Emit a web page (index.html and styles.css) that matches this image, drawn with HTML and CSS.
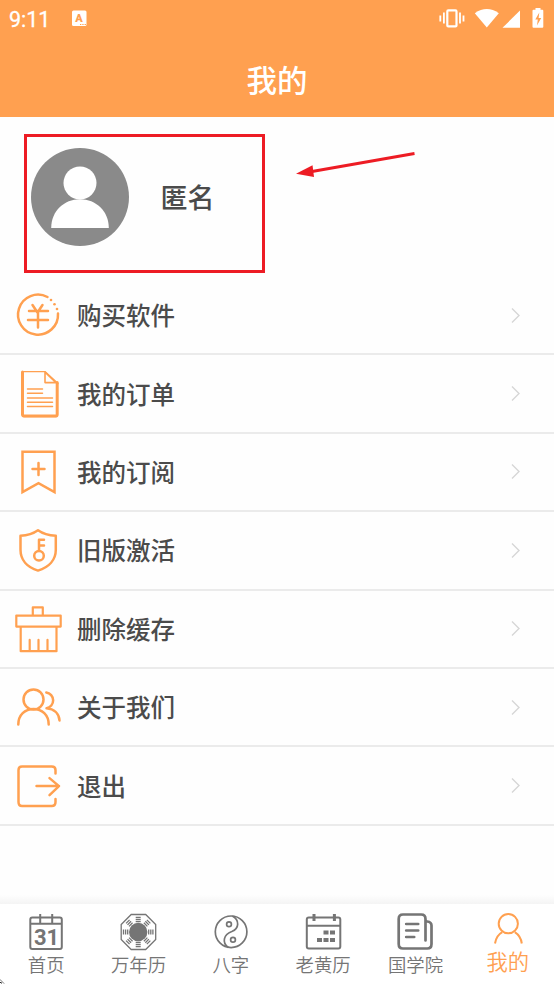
FILE: index.html
```html
<!DOCTYPE html>
<html lang="zh-CN">
<head>
<meta charset="utf-8">
<title>我的</title>
<link rel="stylesheet" href="styles.css">
</head>
<body>
<div class="screen">
  <header class="header">
    <div class="status">
      <span class="clock">9:11</span>
      <svg class="badge" viewBox="72 10 15 16"><rect x="72" y="10.500" width="14.500" height="15.500" rx="1.500" fill="#fff"/><text class="badge-letter" x="79" y="22" text-anchor="middle">A</text><path d="M80 24.500h6" stroke="#ffa050" stroke-width="1.200" stroke-dasharray="1.300 1"/></svg>
      <svg class="signals" viewBox="436 4 112 28" fill="#fff">
        <g fill="none" stroke="#fff" stroke-width="1.800"><rect x="447.300" y="10.400" width="9.200" height="16" rx="1" stroke-width="2.200"/><path d="M443.900 12.500v11M460 12.500v11M440.300 15.500v6M463.500 15.500v6"/></g>
        <path d="M474.800 13.200Q486.800 4.800 498.800 13.200L486.800 27.500Z"/><path d="M520 10.500V27.800H502.500Z"/>
        <path d="M535.500 8h5v1.800h1.800q1 0 1 1v16q0 1-1 1h-8.800q-1 0-1-1v-16q0-1 1-1h2z"/>
        <path d="M539.300 12.500l-4 7h2.500l-.8 6 4.200-7.500h-2.600l.7-5.500z" fill="#ffa050"/>
      </svg>
    </div>
    <h1 class="title">我的</h1>
  </header>

  <section class="profile">
    <svg class="avatar" viewBox="0 0 98 98"><circle cx="49" cy="49" r="49" fill="#8a8a8a"/><circle cx="49" cy="35" r="16.500" fill="#fff"/><path d="M20.200 80C20.200 63 33 51.200 49 51.200S77.800 63 77.800 80Z" fill="#fff"/></svg>
    <span class="name">匿名</span>
    <svg class="annotation" viewBox="0 117 554 160"><rect x="25.500" y="135.500" width="238" height="136" fill="none" stroke="#ed1c24" stroke-width="3"/><path d="M312 171.500L414.500 153.500" stroke="#ed1c24" stroke-width="3"/><path d="M296 173.800L312.500 165.300L314 177Z" fill="#ed1c24"/></svg>
  </section>

  <nav class="menu">
    <a class="row">
      <svg class="icon" viewBox="12 288.500 54 52"><path d="M47.500 296.500A20 20 0 1 0 58 313"/><path d="M32.500 304.500l5 7.500 5-7.500M29 310.500h19M28 319.500h20M38 311v16"/><g class="dots"><circle cx="51" cy="299.500" r="1.300"/><circle cx="54.500" cy="303.800" r="1.300"/><circle cx="57" cy="308.500" r="1.300"/></g></svg>
      <span>购买软件</span><svg class="chevron" viewBox="0 0 10 17"><path d="M1 1.500L8 8.500L1 15.500"/></svg>
    </a>
    <a class="row">
      <svg class="icon" viewBox="12 367.400 54 52"><path stroke-width="1.300" d="M23 371h22l13 12"/><path stroke-width="3" d="M22.500 371.500v42.500q0 1.500 2 1.500h31q1.700 0 1.700-1.500V382"/><path stroke-width="1.300" d="M23 416h34"/><path stroke-width="1.600" d="M45 371.500v10.500h11z"/><path stroke-width="1.500" d="M27.500 388.500h15M27.500 392.700h15M27.500 397.300h25M27.500 401.600h25M27.500 406h25"/></svg>
      <span>我的订单</span><svg class="chevron" viewBox="0 0 10 17"><path d="M1 1.500L8 8.500L1 15.500"/></svg>
    </a>
    <a class="row">
      <svg class="icon" viewBox="12 445.800 54 52"><path stroke-linejoin="miter" d="M22.500 451.500H54.500V492L38.500 483L22.500 492Z"/><path d="M32.500 468.800h12M38.500 462.800v12"/></svg>
      <span>我的订阅</span><svg class="chevron" viewBox="0 0 10 17"><path d="M1 1.500L8 8.500L1 15.500"/></svg>
    </a>
    <a class="row">
      <svg class="icon" viewBox="12 524.200 54 52"><path d="M38 530.500Q31 535.500 20.500 536V550C20.500 560 27 567.500 38 570.800C49 567.500 55.800 560 55.800 550V536Q45 535.500 38 530.500Z"/><circle cx="39" cy="556" r="4.800"/><path d="M39 551V540h5M39 545.700h5"/></svg>
      <span>旧版激活</span><svg class="chevron" viewBox="0 0 10 17"><path d="M1 1.500L8 8.500L1 15.500"/></svg>
    </a>
    <a class="row">
      <svg class="icon" viewBox="12 602.600 54 52"><path stroke-width="2.200" d="M32.800 615v-8h10v8M16.300 615.200H60.700V626.200H16.300ZM20.700 626.500V650.800H56.500V626.500M29.700 639.500v11M38.500 639.500v11M47.500 639.500v11"/></svg>
      <span>删除缓存</span><svg class="chevron" viewBox="0 0 10 17"><path d="M1 1.500L8 8.500L1 15.500"/></svg>
    </a>
    <a class="row">
      <svg class="icon" viewBox="12 681 54 52"><circle cx="33.500" cy="699.500" r="10"/><path d="M18.300 724.500C18.300 715 25 709 33.500 709S48.700 715 48.700 724.500M46.300 692.500A8 8 0 0 1 46.500 708.300C54 709 59 713.500 59.500 720.500"/></svg>
      <span>关于我们</span><svg class="chevron" viewBox="0 0 10 17"><path d="M1 1.500L8 8.500L1 15.500"/></svg>
    </a>
    <a class="row">
      <svg class="icon" viewBox="12 759.400 54 52"><path d="M55.500 773V769.500Q55.500 765.800 51.800 765.800H22Q18.500 765.800 18.500 769.500V801.500Q18.500 805.500 22 805.500H51.800Q55.500 805.500 55.500 801.500V798.500M36.500 785.500H59M49.500 777.500L59 785.500L49.500 794.500"/></svg>
      <span>退出</span><svg class="chevron" viewBox="0 0 10 17"><path d="M1 1.500L8 8.500L1 15.500"/></svg>
    </a>
  </nav>

  <footer class="tabs">
    <a class="tab"><svg viewBox="22 910 48 43"><rect x="30.300" y="917.500" width="31.500" height="31.500" rx="2"/><path d="M30 923.800h32M40.200 914v10M52.200 914v10"/><text class="date" x="46.500" y="944.500" text-anchor="middle">31</text></svg><span>首页</span></a>
    <a class="tab"><svg viewBox="114.300 910 48 43"><path stroke-width="1.300" d="M131.500 914.500h14.500l10 10v15l-10 10h-14.500l-10-10v-15z"/><circle cx="138.500" cy="932" r="9.200" fill="#757575" stroke="none"/><g stroke-width="1.300"><g id="trigram"><path d="M136 917.300h5M136 919.400h5M136 921.500h5"/></g><use href="#trigram" transform="rotate(45 138.500 932)"/><use href="#trigram" transform="rotate(90 138.500 932)"/><use href="#trigram" transform="rotate(135 138.500 932)"/><use href="#trigram" transform="rotate(180 138.500 932)"/><use href="#trigram" transform="rotate(225 138.500 932)"/><use href="#trigram" transform="rotate(270 138.500 932)"/><use href="#trigram" transform="rotate(315 138.500 932)"/></g></svg><span>万年历</span></a>
    <a class="tab"><svg viewBox="206.700 910 48 43"><g stroke-width="1.700"><circle cx="230.800" cy="931.800" r="15.800"/><path d="M232 916C239.500 920 239 928.500 231.500 931.500C223 934.500 221.500 943 228 947.500"/><circle cx="228.700" cy="924.200" r="2.400"/><circle cx="232.700" cy="939.800" r="2.400"/></g></svg><span>八字</span></a>
    <a class="tab"><svg viewBox="299 910 48 43"><rect x="306.800" y="917.500" width="33.500" height="31" rx="2"/><path d="M307 925.700h33"/><path stroke-width="3" d="M314 914v7M334.400 914v7"/><path stroke-width="4" stroke-dasharray="5 1.500" d="M323.500 932.500h11.500M317 940h18"/></svg><span>老黄历</span></a>
    <a class="tab"><svg viewBox="391.300 910 48 43"><g stroke-width="2.700" stroke-linecap="round"><path d="M425.800 940.500V919Q425.800 914.500 421.500 914.500H403.300Q399 914.500 399 919V944Q399 948.500 403.300 948.500H427.500Q431.800 948.500 431.800 944V925.500Q431.800 922 427.500 921.500"/><path d="M406.500 924h12M406.500 930.500h12M406.500 937h8"/></g></svg><span>国学院</span></a>
    <a class="tab active"><svg viewBox="483.700 910 48 43"><circle cx="508" cy="923.700" r="9.600"/><path d="M494.700 943.500Q496 935.500 502 932.200M514.500 932.200Q520.500 936 521.500 943.500"/></svg><span>我的</span></a>
  </footer>
  <svg class="pointer" viewBox="0 0 5 5"><path d="M0 .5l4 4M0 3.500h1.500v1.500" stroke="#222" stroke-width="1" fill="none" stroke-dasharray="1 .5"/></svg>
</div>
</body>
</html>
```

FILE: styles.css
```css
* { box-sizing: border-box; }
body { margin: 0; background: #fff; font-family: "Noto Sans CJK SC", sans-serif; color: #4b4b4b; }
svg { display: block; flex: none; }
.screen { position: relative; width: 554px; height: 984px; display: flex; flex-direction: column; overflow: hidden; background: #fefefe; }
.header { height: 117px; background: #ffa050; color: #fff; flex: none; }
.status { height: 38px; display: flex; align-items: center; padding: 0 6px 2px 9px; }
.clock { font: 400 21.500px/38px Roboto, sans-serif; width: 63px; padding-top: 3px; -webkit-text-stroke: .3px #fff; }
.badge { width: 15px; height: 16px; }
.badge-letter { font: 900 11px Roboto, sans-serif; fill: #ffa050; }
.signals { width: 112px; height: 28px; margin-left: auto; }
.title { margin: 0; text-align: center; font-size: 30.5px; line-height: 83px; font-weight: 500; }
.profile { position: relative; height: 160px; flex: none; display: flex; align-items: center; padding: 0 0 1px 31px; gap: 31.500px; }
.avatar { width: 98px; height: 98px; }
.name { font-size: 27px; line-height: 40px; font-weight: 500; }
.annotation { position: absolute; left: 0; top: 0; width: 554px; height: 160px; }
.menu { flex: none; }
.row { height: 78.4px; display: flex; align-items: center; padding: 0 33px 0 12px; border-bottom: 2px solid #ebebeb; font-size: 24.5px; font-weight: 500; }
.row span { flex: 1; margin-left: 11px; line-height: 36px; }
.icon { width: 54px; height: 52px; fill: none; stroke: #ffa050; stroke-width: 2.500; stroke-linecap: round; stroke-linejoin: round; }
.dots { fill: #ffa050; stroke: none; }
.chevron { width: 10px; height: 17px; fill: none; stroke: #d6d6d6; stroke-width: 1.400; }
.tabs { margin-top: auto; height: 89px; flex: none; display: grid; grid-template-columns: repeat(6, 1fr); padding-top: 15px; background: linear-gradient(#fefefe, #f4f4f4 9px, #fff 9px); }
.tab { display: flex; flex-direction: column; align-items: center; color: #757575; font-size: 18.400px; line-height: 24px; font-weight: 350; }
.tab svg { width: 48px; height: 43px; fill: none; stroke: currentColor; stroke-width: 2; }
.tab span { margin-top: -1px; }
.tab .date { font: 700 22px Roboto, sans-serif; fill: currentColor; stroke: none; }
.active { color: #ffa050; }
.tab.active span { font-size: 21.300px; margin-top: -4px; }
.pointer { position: absolute; left: 0; bottom: 0; width: 5px; height: 5px; }
```
